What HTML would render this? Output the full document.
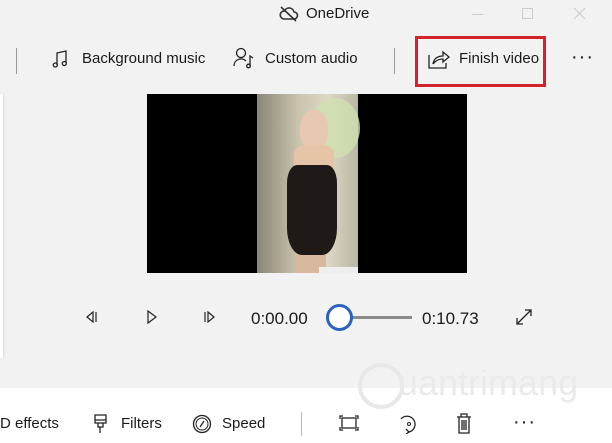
<!DOCTYPE html>
<html><head><style>
*{margin:0;padding:0;box-sizing:border-box}
body{width:612px;height:443px;background:#f2f2f2;font-family:"Segoe UI","Liberation Sans",sans-serif;color:#1a1a1a;position:relative;overflow:hidden}
.a{position:absolute}
.t{font-size:15px;white-space:nowrap}
</style></head><body>
<svg class="a" style="left:279px;top:5px" width="20" height="18" viewBox="0 0 20 18"><path d="M5 14h10a3.5 3.5 0 0 0 0-7 5 5 0 0 0-9.5-1A4 4 0 0 0 5 14z" fill="none" stroke="#333" stroke-width="1.6"/><path d="M2 2l15 14" stroke="#333" stroke-width="1.6"/></svg>
<div class="a t" style="left:306px;top:5px;font-size:15px">OneDrive</div>
<div class="a" style="left:472px;top:14px;width:11px;height:1px;background:#ccc"></div>
<div class="a" style="left:522px;top:8px;width:11px;height:11px;border:1px solid #ccc"></div>
<svg class="a" style="left:573px;top:7px" width="13" height="13"><path d="M1 1l11 11M12 1L1 12" stroke="#ccc"/></svg>
<div class="a" style="left:16px;top:48px;width:1px;height:26px;background:#999"></div>
<svg class="a" style="left:51px;top:49px" width="20" height="20" viewBox="0 0 20 20"><path d="M6 16V4l9-2v12" fill="none" stroke="#222" stroke-width="1.3"/><circle cx="4.3" cy="16" r="2" fill="none" stroke="#222" stroke-width="1.3"/><circle cx="13.3" cy="14.5" r="2" fill="none" stroke="#222" stroke-width="1.3"/></svg>
<div class="a t" style="left:82px;top:50px">Background music</div>
<svg class="a" style="left:233px;top:47px" width="24" height="22" viewBox="0 0 24 22"><circle cx="8" cy="6" r="4.5" fill="none" stroke="#222" stroke-width="1.3"/><path d="M1 19a7 7 0 0 1 12-5" fill="none" stroke="#222" stroke-width="1.3"/><path d="M17 19V9l3 2" fill="none" stroke="#222" stroke-width="1.3"/><circle cx="15.5" cy="19" r="1.8" fill="none" stroke="#222" stroke-width="1.3"/></svg>
<div class="a t" style="left:265px;top:50px">Custom audio</div>
<div class="a" style="left:394px;top:48px;width:1px;height:26px;background:#999"></div>
<div class="a" style="left:415px;top:36px;width:131px;height:51px;border:3px solid #d2232a"></div>
<svg class="a" style="left:428px;top:49px" width="22" height="20" viewBox="0 0 22 20"><path d="M1 6v13h17v-5" fill="none" stroke="#222" stroke-width="1.3"/><path d="M5 15c1-6 5-8 10-8V3l6 5-6 5V10c-4 0-7 1-10 5z" fill="none" stroke="#222" stroke-width="1.3"/></svg>
<div class="a t" style="left:459px;top:50px">Finish video</div>
<div class="a" style="left:571px;top:46px;font-size:20px;letter-spacing:1px">···</div>
<div class="a" style="left:0;top:94px;width:3px;height:264px;background:#fff;box-shadow:1px 0 2px #ddd"></div>
<div class="a" style="left:147px;top:94px;width:320px;height:179px;background:#000"></div>
<div class="a" style="left:257px;top:94px;width:101px;height:179px;background:linear-gradient(90deg,#8a8676,#c9c3ad 40%,#ddd8c4 70%,#b9b6a4)"></div>
<div class="a" style="left:310px;top:98px;width:50px;height:60px;border-radius:50%;background:#cfe0b0;opacity:.8"></div>
<div class="a" style="left:300px;top:110px;width:28px;height:40px;border-radius:45%;background:#e8c8b0"></div>
<div class="a" style="left:294px;top:145px;width:40px;height:30px;border-radius:30%;background:#e6c4a8"></div>
<div class="a" style="left:287px;top:165px;width:50px;height:90px;border-radius:20% 20% 30% 30%;background:#1f1a17"></div>
<div class="a" style="left:296px;top:255px;width:30px;height:18px;background:#d8b89e"></div>
<div class="a" style="left:319px;top:267px;width:39px;height:6px;background:#eee"></div>
<svg class="a" style="left:83px;top:309px" width="16" height="16"><path d="M10 3L4 8l6 5z" fill="none" stroke="#222" stroke-width="1.2"/><path d="M13 3v10" stroke="#222" stroke-width="1.2"/></svg>
<svg class="a" style="left:144px;top:309px" width="16" height="16"><path d="M4 2l8 6-8 6z" fill="none" stroke="#222" stroke-width="1.2"/></svg>
<svg class="a" style="left:202px;top:309px" width="16" height="16"><path d="M3 3v10" stroke="#222" stroke-width="1.2"/><path d="M6 3l6 5-6 5z" fill="none" stroke="#222" stroke-width="1.2"/></svg>
<div class="a t" style="left:251px;top:309px;font-size:17px">0:00.00</div>
<div class="a" style="left:340px;top:316px;width:72px;height:3px;background:#8a8a8a"></div>
<div class="a" style="left:326px;top:304px;width:27px;height:27px;border-radius:50%;background:#fff;border:3px solid #2b62c4"></div>
<div class="a t" style="left:422px;top:309px;font-size:17px">0:10.73</div>
<svg class="a" style="left:514px;top:307px" width="20" height="20"><path d="M3 17L17 3M11 3h6v6M3 11v6h6" fill="none" stroke="#222" stroke-width="1.3"/></svg>
<div class="a" style="left:0;top:388px;width:612px;height:55px;background:#fff"></div>
<div class="a" style="left:358px;top:363px;width:46px;height:46px;border-radius:50%;border:4px solid #e8e8e8"></div>
<div class="a" style="left:398px;top:362px;font-size:36px;color:#eaeaea;letter-spacing:0px">uantrimang</div>
<div class="a t" style="left:0;top:415px">D effects</div>
<svg class="a" style="left:93px;top:414px" width="16" height="20"><path d="M2 1h11v8H2zM2 6h11M5 9v4h5V9M7 13v6" fill="none" stroke="#222" stroke-width="1.3"/></svg>
<div class="a t" style="left:121px;top:415px">Filters</div>
<svg class="a" style="left:192px;top:414px" width="20" height="20"><circle cx="10" cy="10" r="8.5" fill="none" stroke="#222" stroke-width="1.3"/><circle cx="10" cy="10" r="6" fill="none" stroke="#222" stroke-width="1"/><path d="M8 13l4-6" stroke="#222" stroke-width="1.3"/></svg>
<div class="a t" style="left:222px;top:415px">Speed</div>
<div class="a" style="left:301px;top:412px;width:1px;height:24px;background:#bbb"></div>
<svg class="a" style="left:338px;top:414px" width="22" height="18"><path d="M2 5V2h3M17 2h3v3M20 13v3h-3M5 16H2v-3" fill="none" stroke="#222" stroke-width="1.3"/><rect x="4" y="4" width="14" height="10" fill="none" stroke="#222" stroke-width="1.3"/></svg>
<svg class="a" style="left:397px;top:412px" width="22" height="22"><path d="M4 7a8 8 0 1 1 8 13" fill="none" stroke="#222" stroke-width="1.3"/><path d="M9 17l3 3-3 2" fill="none" stroke="#222" stroke-width="1.3"/><circle cx="12" cy="12" r="1.5" fill="none" stroke="#222"/></svg>
<svg class="a" style="left:456px;top:413px" width="16" height="22"><path d="M1 4h14M5 4V1h6v3M3 4v16h10V4M6 7v10M8 7v10M10 7v10" fill="none" stroke="#222" stroke-width="1.3"/></svg>
<div class="a" style="left:513px;top:411px;font-size:20px;letter-spacing:1px">···</div>
</body></html>
